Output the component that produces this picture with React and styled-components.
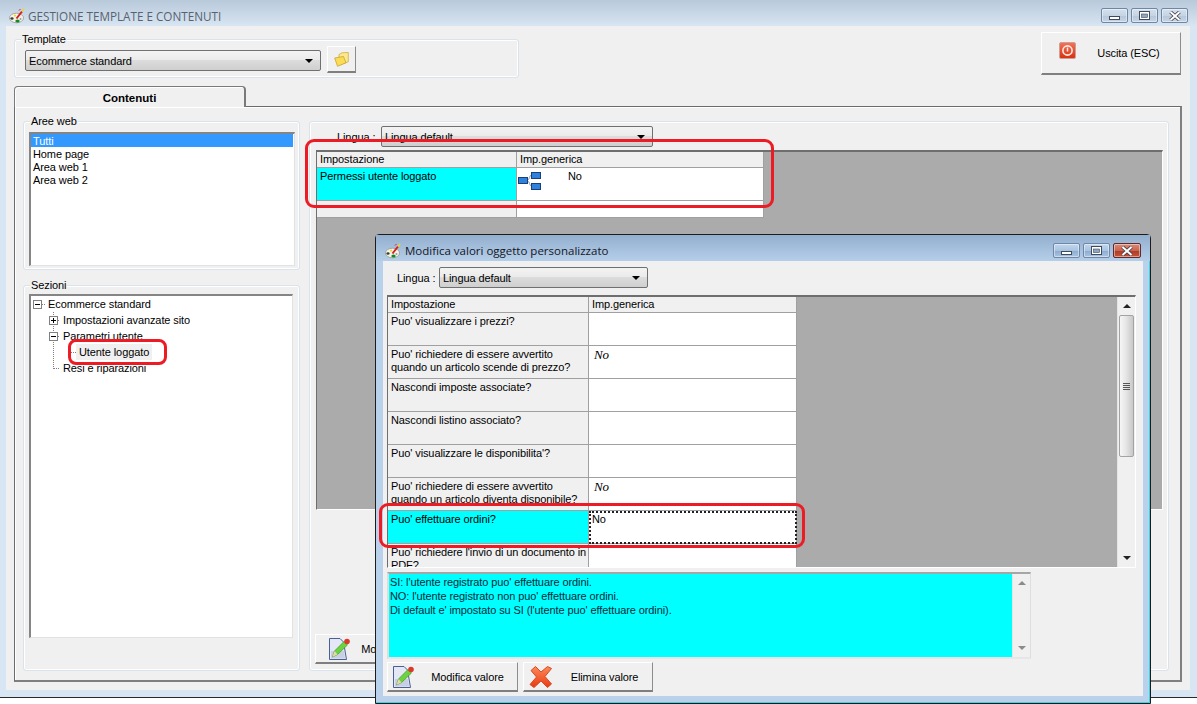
import React from "react";
import styled, { createGlobalStyle } from "styled-components";

const GlobalStyle = createGlobalStyle`
  html, body { margin: 0; padding: 0; background: #fff; }
  body { font-family: "Liberation Sans", Arial, sans-serif; font-size: 11px; letter-spacing: -0.1px; color: #000; }
  * { box-sizing: border-box; }
`;

const Stage = styled.div`
  position: relative;
  width: 1197px;
  height: 704px;
  overflow: hidden;
  background: #fff;
`;

const MainWindow = styled.div`
  height: 698px;
  display: flex;
  flex-direction: column;
  background: #d8e5f2;
  border-bottom: 1px solid #2a2a2a;
`;

const TitleBar = styled.div`
  height: 26px;
  flex: none;
  display: flex;
  align-items: center;
  gap: ${p => (p.$active ? 4 : 3)}px;
  padding: 5px 9px 0 9px;
  background: ${p =>
    p.$active
      ? "linear-gradient(#93afce, #b5cfea)"
      : "linear-gradient(#b8c9da, #d8e5f2)"};
`;

const TitleText = styled.span`
  flex: 1;
  font-family: "Open Sans", sans-serif;
  font-size: ${p => (p.$active ? 11.5 : 11.7)}px;
  letter-spacing: 0;
  color: ${p => (p.$active ? "#15151f" : "#566270")};
`;

const WinButtons = styled.div`
  display: flex;
  gap: 3px;
  align-self: flex-start;
  margin-top: 3px;
`;

const WinButton = styled.div`
  width: ${p => (p.$close ? 28 : 27)}px;
  height: 15px;
  display: flex;
  align-items: center;
  justify-content: center;
  border-radius: 2px;
  border: 1px solid ${p => (p.$close ? "#5e2a2a" : "#6f87a6")};
  box-shadow: inset 0 0 0 1px rgba(255, 255, 255, 0.45);
  background: ${p =>
    p.$close
      ? "linear-gradient(#d98a78 0%, #c9654f 50%, #b13c26 55%, #c4543c 100%)"
      : p.$active
      ? "linear-gradient(#c2d7ee 0%, #a9c3e0 50%, #8fadd0 55%, #a8c4e2 100%)"
      : "linear-gradient(#d5e0ec 0%, #c6d4e3 50%, #b7c8da 55%, #c5d5e6 100%)"};
`;

const Client = styled.div`
  flex: 1;
  min-height: 0;
  margin: 0 7px 7px 6px;
  display: flex;
  flex-direction: column;
  background: #f0f0f0;
`;

const TopRow = styled.div`
  flex: none;
  height: 52px;
  padding: 6px 9px 0 8px;
  display: flex;
  justify-content: space-between;
  align-items: flex-start;
`;

const Group = styled.div`
  position: relative;
  border: 1px solid #d8e3ec;
  border-radius: 3px;
  box-shadow: inset 0 0 0 1px #fff;
`;

const Caption = styled.span`
  position: absolute;
  top: -7px;
  left: ${p => p.$left || 6}px;
  padding: 0 1px;
  line-height: 13px;
  background: #f0f0f0;
`;

const TemplateGroup = styled(Group)`
  width: 505px;
  height: 39px;
  margin-top: 7px;
  padding: 6px 0 0 10px;
  display: flex;
  align-items: flex-start;
  gap: 6px;
`;

const Combo = styled.div`
  position: relative;
  width: ${p => p.$width}px;
  height: 21px;
  flex: none;
  display: flex;
  align-items: center;
  padding-left: 3px;
  border: 1px solid #707070;
  border-radius: 2px;
  background: linear-gradient(#f3f3f3 0%, #ebebeb 45%, #dcdcdc 50%, #cfcfcf 100%);
  margin-top: ${p => p.$nudge || 0}px;

  &::after {
    content: "";
    position: absolute;
    right: 7px;
    top: 8px;
    border: 4px solid transparent;
    border-top: 4px solid #000;
    border-bottom: 0;
  }
`;

const Button = styled.div`
  width: ${p => p.$width}px;
  height: ${p => p.$height || 30}px;
  flex: none;
  display: flex;
  align-items: center;
  padding-left: ${p => p.$pad || 5}px;
  margin-left: ${p => p.$shift || 0}px;
  background: #f0f0f0;
  border-top: 1px solid #fff;
  border-left: 1px solid #fff;
  border-right: 1px solid #8c8c8c;
  border-bottom: 2px solid #7f7f7f;
`;

const ButtonLabel = styled.span`
  flex: 1;
  text-align: center;
  padding-left: ${p => p.$pad || 4}px;
`;

const IconSlot = styled.div`
  display: flex;
  flex: none;
  margin-top: ${p => p.$top || 0}px;
`;

const FolderButton = styled(Button)`
  padding-left: 0;
  justify-content: center;
`;

const TabStrip = styled.div`
  flex: none;
  height: 20px;
  margin: 8px 0 0 8px;
`;

const Tab = styled.div`
  position: relative;
  z-index: 1;
  width: 232px;
  height: 21px;
  display: flex;
  align-items: center;
  justify-content: center;
  padding-top: 2px;
  font-weight: bold;
  font-size: 11.5px;
  letter-spacing: 0;
  background: #f0f0f0;
  border: 1px solid #7a7a7a;
  border-right-width: 2px;
  border-bottom: 0;
  border-radius: 4px 4px 0 0;
  box-shadow: inset 1px 1px 0 #fff;
`;

const TabPanel = styled.div`
  flex: 1;
  min-height: 0;
  margin: 0 8px 8px 8px;
  padding: 14px 11px 9px 8px;
  display: flex;
  gap: 9px;
  border-top: 1px solid #6b6b6b;
  border-left: 1px solid #6b6b6b;
  border-right: 2px solid #7f7f7f;
  border-bottom: 2px solid #7f7f7f;
  box-shadow: inset 1px 1px 0 #fff;
`;

const LeftColumn = styled.div`
  width: 277px;
  flex: none;
  display: flex;
  flex-direction: column;
  gap: 15px;
`;

const AreeGroup = styled(Group)`
  height: 149px;
  flex: none;
  display: flex;
  padding: 10px 4px 3px 5px;
`;

const SezioniGroup = styled(Group)`
  flex: 1;
  display: flex;
  padding: 8px 6px 32px 5px;
`;

const Sunken = styled.div`
  flex: 1;
  background: #fff;
  border-top: 2px solid #858585;
  border-left: 2px solid #858585;
  border-right: 1px solid #e2e2e2;
  border-bottom: 1px solid #e2e2e2;
`;

const ListRow = styled.div`
  height: 13px;
  line-height: 14px;
  padding-left: 2px;
  margin-right: 1px;
  background: ${p => (p.$selected ? "#3399ff" : "transparent")};
  color: ${p => (p.$selected ? "#fff" : "#000")};
`;

const TreeRow = styled.div`
  height: 16px;
  display: flex;
  align-items: center;
  white-space: nowrap;
`;

const TreeText = styled.span`
  line-height: 16px;
  padding: 0 3px;
  background: ${p => (p.$selected ? "#f0f0f0" : "transparent")};
`;

const RightGroup = styled(Group)`
  flex: 1;
  display: flex;
  flex-direction: column;
  padding: 4px 5px 6px 6px;
`;

const LangRow = styled.div`
  flex: none;
  display: flex;
  align-items: center;
  height: 21px;
  padding-left: ${p => p.$pad}px;
`;

const LangLabel = styled.span`
  width: ${p => p.$width}px;
  flex: none;
`;

const GridArea = styled.div`
  display: flex;
  height: ${p => p.$height}px;
  margin-top: ${p => p.$top}px;
  overflow: hidden;
  background: #ababab;
  border-top: 2px solid #6e6e6e;
  border-left: 1px solid #6e6e6e;
  border-right: 1px solid #fff;
  border-bottom: 1px solid #fff;
`;

const Table = styled.div`
  flex: none;
  align-self: flex-start;
  display: grid;
  grid-template-columns: ${p => p.$cols};
`;

const Cell = styled.div`
  display: flex;
  align-items: flex-start;
  height: ${p => p.$height}px;
  padding: ${p => (p.$head ? "1px 0 0 3px" : "2px 0 0 3px")};
  line-height: 13px;
  background: ${p => p.$bg || "#f0f0f0"};
  border-right: 1px solid #a0a0a0;
  border-bottom: 1px solid #a0a0a0;
`;

const ItalicNo = styled.span`
  font-family: "Liberation Serif", serif;
  font-style: italic;
  font-size: 13px;
  margin-left: 2px;
`;

const FocusCell = styled(Cell)`
  outline: 2px dotted #222;
  outline-offset: -2px;
`;

const NetworkSlot = styled.div`
  display: flex;
  flex: none;
  margin: 2px 0 0 -2px;
`;

const TreeValue = styled.span`
  margin-left: 27px;
`;

const Filler = styled.div`
  flex: 1;
`;

const ScrollBar = styled.div`
  width: 18px;
  flex: none;
  display: flex;
  flex-direction: column;
  align-items: center;
  padding: 7px 0;
  background: #f0f0f0;
  border-left: 1px solid #e4e4e4;
`;

const Arrow = styled.div`
  flex: none;
  width: 0;
  height: 0;
  border-left: 4px solid transparent;
  border-right: 4px solid transparent;
  border-${p => (p.$down ? "top" : "bottom")}: 4px solid ${p => (p.$soft ? "#8a8a8a" : "#222")};
`;

const Thumb = styled.div`
  width: 15px;
  height: 142px;
  margin-top: 7px;
  display: flex;
  flex-direction: column;
  align-items: center;
  justify-content: center;
  gap: 1px;
  border: 1px solid #a3a3a3;
  border-radius: 2px;
  background: linear-gradient(90deg, #f6f6f6 0%, #e6e6e6 45%, #c8c8c8 100%);
`;

const GripLine = styled.div`
  width: 7px;
  height: 1px;
  background: #555;
`;

const ModalWindow = styled.div`
  position: absolute;
  left: 375px;
  top: 234px;
  width: 776px;
  height: 470px;
  display: flex;
  flex-direction: column;
  background: #b9d1ea;
  border: 1px solid #1c1c1c;
  border-radius: 4px 4px 0 0;
  box-shadow: inset -1px -1px 0 #36d6e6;
`;

const ModalClient = styled.div`
  flex: 1;
  min-height: 0;
  margin: 0 7px 7px 7px;
  padding: 6px 7px 0 4px;
  background: #f0f0f0;
`;

const DescBox = styled.div`
  width: 644px;
  height: 87px;
  margin-top: 4px;
  display: flex;
  border-top: 2px solid #a6a6a6;
  border-left: 2px solid #dcdcdc;
  border-right: 1px solid #dedede;
  border-bottom: 2px solid #e6e6e6;
`;

const DescText = styled.div`
  flex: 1;
  background: #00ffff;
  padding: 1px 0 0 1px;
  line-height: 14px;
  color: #002b3a;
`;

const ButtonRow = styled.div`
  margin-top: 3px;
  display: flex;
  gap: 5px;
`;

const Ring = styled.div`
  position: absolute;
  left: ${p => p.$x}px;
  top: ${p => p.$y}px;
  width: ${p => p.$w}px;
  height: ${p => p.$h}px;
  border: 3px solid #ed1c24;
  border-radius: ${p => p.$r || 9}px;
  pointer-events: none;
`;

function AppIcon() {
  return (
    <svg width="16" height="16" viewBox="0 0 16 16">
      <ellipse cx="7.5" cy="10" rx="7" ry="4.8" fill="#f4f3ea" stroke="#8f8f86" strokeWidth="0.7" />
      <ellipse cx="3" cy="10.5" rx="1.6" ry="1.3" fill="#3a3a3a" />
      <ellipse cx="8.5" cy="13" rx="2.2" ry="1.5" fill="#138a24" />
      <circle cx="6" cy="7.6" r="1.1" fill="#f0d820" />
      <circle cx="11.5" cy="11" r="1" fill="#9a9a9a" />
      <path d="M7.5 10.5 L13 3.5" stroke="#d81e1e" strokeWidth="2" />
      <path d="M13 3.5 L15 1" stroke="#f0d820" strokeWidth="1.5" />
      <path d="M10 2.5 L11.5 1" stroke="#d81e1e" strokeWidth="1" />
    </svg>
  );
}

function WinGlyph({ kind }) {
  if (kind === "min") {
    return (
      <svg width="12" height="10" viewBox="0 0 12 10">
        <rect x="0.5" y="5.5" width="10" height="3" fill="#fff" stroke="#3f4a5c" />
      </svg>
    );
  }
  if (kind === "max") {
    return (
      <svg width="11" height="10" viewBox="0 0 11 10">
        <rect x="0.5" y="0.5" width="10" height="8" fill="#fff" stroke="#3f4a5c" />
        <rect x="2.5" y="3" width="6" height="3.5" fill="#8fa6c2" stroke="#3f4a5c" strokeWidth="0.6" />
      </svg>
    );
  }
  return (
    <svg width="12" height="10" viewBox="0 0 12 10">
      <path d="M1.5 1 L10.5 9 M10.5 1 L1.5 9" stroke="#3f3f48" strokeWidth="3.6" />
      <path d="M1.5 1 L10.5 9 M10.5 1 L1.5 9" stroke="#fff" strokeWidth="2" />
    </svg>
  );
}

function WindowControls({ active }) {
  return (
    <WinButtons>
      <WinButton $active={active}><WinGlyph kind="min" /></WinButton>
      <WinButton $active={active}><WinGlyph kind="max" /></WinButton>
      <WinButton $active={active} $close={active}><WinGlyph kind="close" /></WinButton>
    </WinButtons>
  );
}

function FolderIcon() {
  return (
    <svg width="15" height="15" viewBox="0 0 15 15">
      <path d="M5 2.5 L8 0.8 L14.3 0.5 L14.3 9.8 L5 13 Z" fill="#fbe98f" stroke="#c9a437" strokeWidth="0.7" />
      <path d="M0.7 6 L9.5 4.5 L12 10.8 L3.5 14.3 Z" fill="#fcdc52" stroke="#c29a2c" strokeWidth="0.7" />
    </svg>
  );
}

function PowerIcon() {
  return (
    <svg width="17" height="17" viewBox="0 0 17 17">
      <defs>
        <linearGradient id="pw" x1="0" y1="0" x2="0" y2="1">
          <stop offset="0" stopColor="#f2745a" />
          <stop offset="1" stopColor="#d8300f" />
        </linearGradient>
      </defs>
      <rect x="0.5" y="0.5" width="16" height="16" rx="1.5" fill="url(#pw)" stroke="#c9a196" />
      <circle cx="8.5" cy="8.5" r="4.6" fill="none" stroke="#ffe9e0" strokeWidth="1.6" />
      <path d="M8.5 5.5 V9.5" stroke="#ffe9e0" strokeWidth="1.5" />
    </svg>
  );
}

function NetworkIcon() {
  return (
    <svg width="23" height="18" viewBox="0 0 23 18">
      <path d="M9.5 8 C12 8 11 3 13.5 3 M9.5 9 C12 9 11 14 13.5 14" fill="none" stroke="#8ba0b8" strokeWidth="1" />
      <rect x="0.5" y="5.5" width="9" height="6" fill="#2f82dc" stroke="#1b3f7a" />
      <rect x="13.5" y="0.5" width="9" height="6" fill="#2f82dc" stroke="#1b3f7a" />
      <rect x="13.5" y="11.5" width="9" height="6" fill="#2f82dc" stroke="#1b3f7a" />
    </svg>
  );
}

function EditIcon() {
  return (
    <svg width="21" height="24" viewBox="0 0 21 24">
      <path d="M0.5 1.5 H11 L14.5 5 L17.5 22.5 H0.5 Z" fill="#e4e8f6" stroke="#4a5f92" />
      <path d="M2 14 H15 L16 21.5 H2 Z" fill="#c9cfe2" />
      <path d="M3.5 20 L5.5 14 L15 4.5 L18.5 8 L8.5 17.5 Z" fill="#6cd23f" stroke="#3f9a25" strokeWidth="0.7" />
      <path d="M3.5 20 L5.5 14 L8.5 17.5 Z" fill="#e8d8b0" />
      <circle cx="18" cy="4.5" r="2.8" fill="#d93a2a" />
    </svg>
  );
}

function DeleteIcon() {
  return (
    <svg width="24" height="24" viewBox="0 0 24 24">
      <defs>
        <linearGradient id="del" x1="0" y1="0" x2="0" y2="1">
          <stop offset="0" stopColor="#fb8a5a" />
          <stop offset="1" stopColor="#ea3a12" />
        </linearGradient>
      </defs>
      <path
        d="M2 5.5 L6.5 1.5 L12 7 L18.5 1.5 L22.5 3.5 L16 11.5 L22.5 19 L18.5 22.5 L12 16 L5 22.5 L1 19.5 L7.5 12 Z"
        fill="url(#del)"
        stroke="#d8491f"
        strokeWidth="1"
        strokeLinejoin="round"
      />
    </svg>
  );
}

// dotted connectors and +/- boxes of the tree, one svg per row
function Twig({ width, box, boxX, lineX, lineFrom = 0, lineTo = 16, hookFrom, hookTo }) {
  return (
    <svg width={width} height="16" viewBox={`0 0 ${width} 16`}>
      {lineX !== undefined && (
        <path d={`M${lineX + 0.5} ${lineFrom} V${lineTo}`} stroke="#808080" strokeDasharray="1 1" />
      )}
      <path d={`M${hookFrom} 8.5 H${hookTo}`} stroke="#808080" strokeDasharray="1 1" />
      {box && (
        <g>
          <rect x={boxX + 0.5} y="4.5" width="8" height="8" fill="#fff" stroke="#808080" />
          <path d={`M${boxX + 2} 8.5 H${boxX + 7}`} stroke="#000" />
          {box === "plus" && <path d={`M${boxX + 4.5} 6 V11`} stroke="#000" />}
        </g>
      )}
    </svg>
  );
}

function Tree() {
  return (
    <Sunken>
      <TreeRow>
        <Twig width={14} box="minus" boxX={2} hookFrom={11} hookTo={14} />
        <TreeText>Ecommerce standard</TreeText>
      </TreeRow>
      <TreeRow>
        <Twig width={29} box="plus" boxX={18} hookFrom={27} hookTo={29} lineX={22} lineFrom={0} />
        <TreeText>Impostazioni avanzate sito</TreeText>
      </TreeRow>
      <TreeRow>
        <Twig width={29} box="minus" boxX={18} hookFrom={27} hookTo={29} lineX={22} />
        <TreeText>Parametri utente</TreeText>
      </TreeRow>
      <TreeRow>
        <Twig width={45} hookFrom={38} hookTo={45} lineX={22} />
        <TreeText $selected>Utente loggato</TreeText>
      </TreeRow>
      <TreeRow>
        <Twig width={29} hookFrom={23} hookTo={29} lineX={22} lineTo={9} />
        <TreeText>Resi e riparazioni</TreeText>
      </TreeRow>
    </Sunken>
  );
}

const modalRows = [
  { label: "Puo' visualizzare i prezzi?" },
  { label: "Puo' richiedere di essere avvertito quando un articolo scende di prezzo?", italic: "No" },
  { label: "Nascondi imposte associate?" },
  { label: "Nascondi listino associato?" },
  { label: "Puo' visualizzare le disponibilita'?" },
  { label: "Puo' richiedere di essere avvertito quando un articolo diventa disponibile?", italic: "No" },
  { label: "Puo' effettuare ordini?", focus: "No" },
  { label: "Puo' richiedere l'invio di un documento in PDF?" },
];

function ModalTable() {
  return (
    <Table $cols="201px 208px">
      <Cell $head $height={16}>Impostazione</Cell>
      <Cell $head $height={16}>Imp.generica</Cell>
      {modalRows.map(row => (
        <React.Fragment key={row.label}>
          <Cell $height={33} $bg={row.focus ? "#00ffff" : undefined}>
            <span>{row.label}</span>
          </Cell>
          {row.focus ? (
            <FocusCell $height={33} $bg="#fff">
              <span>{row.focus}</span>
            </FocusCell>
          ) : (
            <Cell $height={33} $bg="#fff">
              {row.italic && <ItalicNo>{row.italic}</ItalicNo>}
            </Cell>
          )}
        </React.Fragment>
      ))}
    </Table>
  );
}

export default function App() {
  return (
    <Stage>
      <GlobalStyle />
      <MainWindow>
        <TitleBar>
          <AppIcon />
          <TitleText>GESTIONE TEMPLATE E CONTENUTI</TitleText>
          <WindowControls />
        </TitleBar>
        <Client>
          <TopRow>
            <TemplateGroup>
              <Caption>Template</Caption>
              <Combo $width={296} $nudge={4}>Ecommerce standard</Combo>
              <FolderButton $width={29} $height={27}><FolderIcon /></FolderButton>
            </TemplateGroup>
            <Button $width={140} $height={43} $pad={17}>
              <IconSlot $top={-5}><PowerIcon /></IconSlot>
              <ButtonLabel $pad={1}>Uscita (ESC)</ButtonLabel>
            </Button>
          </TopRow>
          <TabStrip>
            <Tab>Contenuti</Tab>
          </TabStrip>
          <TabPanel>
            <LeftColumn>
              <AreeGroup>
                <Caption>Aree web</Caption>
                <Sunken>
                  <ListRow $selected>Tutti</ListRow>
                  <ListRow>Home page</ListRow>
                  <ListRow>Area web 1</ListRow>
                  <ListRow>Area web 2</ListRow>
                </Sunken>
              </AreeGroup>
              <SezioniGroup>
                <Caption>Sezioni</Caption>
                <Tree />
              </SezioniGroup>
            </LeftColumn>
            <RightGroup>
              <LangRow $pad={21}>
                <LangLabel $width={44}>Lingua :</LangLabel>
                <Combo $width={272}>Lingua default</Combo>
              </LangRow>
              <GridArea $height={360} $top={3}>
                <Table $cols="200px 247px">
                  <Cell $head $height={16}>Impostazione</Cell>
                  <Cell $head $height={16}>Imp.generica</Cell>
                  <Cell $height={33} $bg="#00ffff">Permessi utente loggato</Cell>
                  <Cell $height={33} $bg="#fff">
                    <NetworkSlot><NetworkIcon /></NetworkSlot>
                    <TreeValue>No</TreeValue>
                  </Cell>
                  <Cell $height={17} />
                  <Cell $height={17} $bg="#fff" />
                </Table>
              </GridArea>
              <Filler />
              <Button $width={127} $pad={13} $shift={-1}>
                <EditIcon />
                <ButtonLabel>Modifica valore</ButtonLabel>
              </Button>
            </RightGroup>
          </TabPanel>
        </Client>
      </MainWindow>

      <Ring $x={305} $y={139} $w={469} $h={69} />
      <Ring $x={68} $y={339} $w={99} $h={26} $r={8} />

      <ModalWindow>
        <TitleBar $active>
          <AppIcon />
          <TitleText $active>Modifica valori oggetto personalizzato</TitleText>
          <WindowControls active />
        </TitleBar>
        <ModalClient>
          <LangRow $pad={10}>
            <LangLabel $width={42}>Lingua :</LangLabel>
            <Combo $width={209}>Lingua default</Combo>
          </LangRow>
          <GridArea $height={273} $top={7}>
            <ModalTable />
            <Filler />
            <ScrollBar>
              <Arrow />
              <Thumb>
                <GripLine />
                <GripLine />
                <GripLine />
                <GripLine />
              </Thumb>
              <Filler />
              <Arrow $down />
            </ScrollBar>
          </GridArea>
          <DescBox>
            <DescText>
              SI: l'utente registrato puo' effettuare ordini.
              <br />
              NO: l'utente registrato non puo' effettuare ordini.
              <br />
              Di default e' impostato su SI (l'utente puo' effettuare ordini).
            </DescText>
            <ScrollBar>
              <Arrow $soft />
              <Filler />
              <Arrow $soft $down />
            </ScrollBar>
          </DescBox>
          <ButtonRow>
            <Button $width={131}>
              <EditIcon />
              <ButtonLabel>Modifica valore</ButtonLabel>
            </Button>
            <Button $width={130}>
              <DeleteIcon />
              <ButtonLabel>Elimina valore</ButtonLabel>
            </Button>
          </ButtonRow>
        </ModalClient>
      </ModalWindow>

      <Ring $x={379} $y={503} $w={426} $h={45} />
    </Stage>
  );
}
